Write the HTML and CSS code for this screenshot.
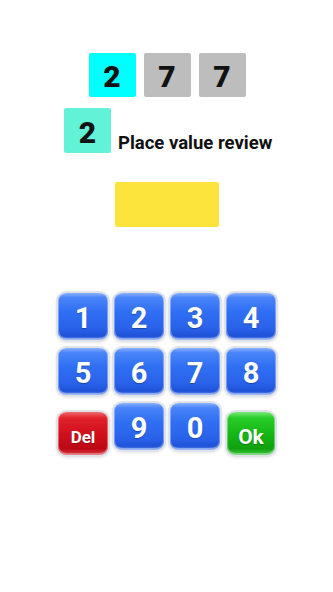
FILE: index.html
```html
<!DOCTYPE html>
<html>
<head>
<meta charset="utf-8">
<link rel="stylesheet" href="styles.css">
</head>
<body>
<div class="page">
  <div class="digits">
    <div class="digit cyan">2</div>
    <div class="digit gray">7</div>
    <div class="digit gray">7</div>
  </div>
  <div class="prompt">
    <div class="digit teal">2</div>
    <div class="prompt-text">Place value review</div>
  </div>
  <div class="answer"></div>
  <div class="keypad">
    <div class="key blue">1</div>
    <div class="key blue">2</div>
    <div class="key blue">3</div>
    <div class="key blue">4</div>
    <div class="key blue">5</div>
    <div class="key blue">6</div>
    <div class="key blue">7</div>
    <div class="key blue">8</div>
    <div class="key red small">Del</div>
    <div class="key blue">9</div>
    <div class="key blue">0</div>
    <div class="key green small ok">Ok</div>
  </div>
</div>
</body>
</html>
```
FILE: styles.css
```css
html, body {
  margin: 0;
  padding: 0;
  background: #ffffff;
}
body {
  font-family: Roboto, "Liberation Sans", Arial, sans-serif;
}
.page {
  width: 333px;
  height: 592px;
  padding-top: 53px;
  box-sizing: border-box;
}
.digits {
  display: flex;
  justify-content: center;
  gap: 8px;
  padding-left: 1px;
}
.digit {
  width: 47px;
  height: 44px;
  border-radius: 2px;
  display: flex;
  align-items: center;
  justify-content: center;
  font-weight: 900;
  font-size: 30px;
  padding-top: 3px;
  box-sizing: border-box;
  color: #121212;
}
.cyan { background: #00ffff; }
.gray { background: #bdbdbd; }
.teal {
  background: #62f2d8;
  height: 45px;
}
.prompt {
  display: flex;
  align-items: flex-end;
  margin-top: 11px;
  padding-left: 64px;
  gap: 7px;
}
.prompt-text {
  font-size: 18.5px;
  line-height: 20px;
  font-weight: 700;
  color: #111;
}
.answer {
  width: 104px;
  height: 45px;
  margin: 29px auto 0;
  background: #fde43c;
  border-radius: 2px;
}
.keypad {
  display: grid;
  grid-template-columns: repeat(4, 50px);
  grid-auto-rows: 47px;
  column-gap: 6px;
  row-gap: 8px;
  width: 218px;
  margin: 66px auto 0;
  padding-left: 1px;
}
.key {
  display: flex;
  align-items: center;
  justify-content: center;
  color: #ffffff;
  font-weight: 700;
  font-size: 29px;
  padding-top: 3px;
  box-sizing: border-box;
  border-radius: 9px / 8px;
  text-shadow: 0 1px 1px rgba(0, 0, 0, 0.3);
  box-shadow: 0 -1px 0 1px rgba(255,255,255,0.35) inset, 0 0 0 2px #dfe2e8, 0 1px 3px 2px rgba(0, 0, 0, 0.1);
}
.blue {
  background: linear-gradient(to bottom, #8ab2ff 0%, #4a84f8 10%, #2f6ff4 40%, #2962ea 75%, #1f52d6 92%, #6f98f2 100%);
}
.red {
  background: linear-gradient(to bottom, #f06a6e 0%, #e0222c 14%, #d0101c 50%, #bc0814 85%, #d83a40 100%);
}
.green {
  background: linear-gradient(to bottom, #7ae87a 0%, #28cc28 14%, #16b816 50%, #0fa00f 85%, #40c840 100%);
}
.small {
  margin-top: 9px;
  height: 43px;
  font-size: 17px;
  padding-top: 6px;
}
.ok {
  font-size: 21px;
  margin-left: 1px;
  width: 48px;
}
```
